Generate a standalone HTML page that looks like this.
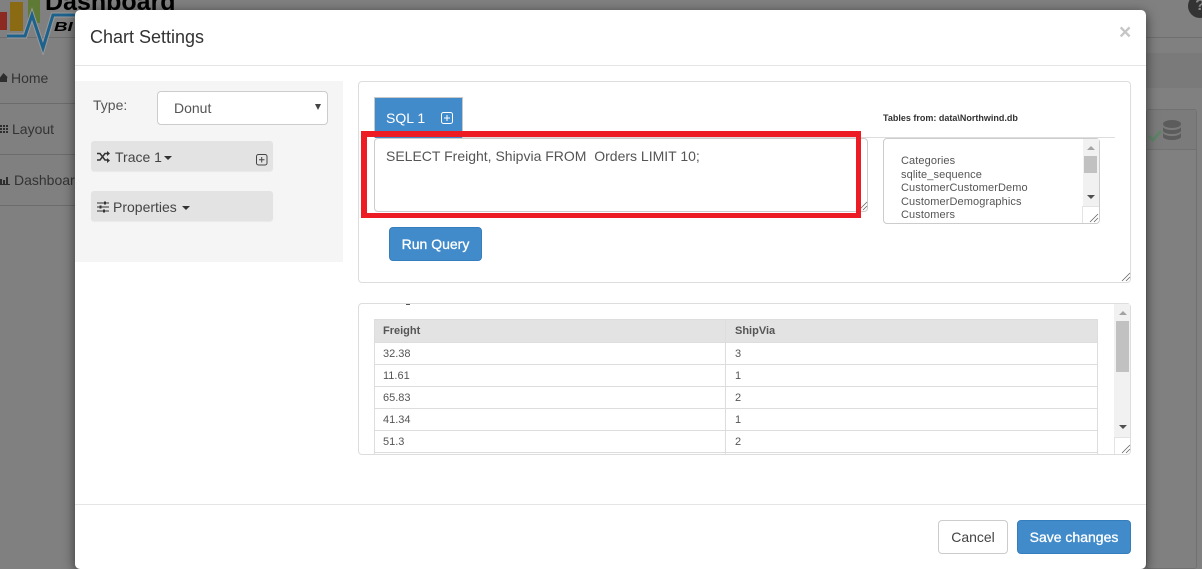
<!DOCTYPE html>
<html><head><meta charset="utf-8"><style>
html,body{margin:0;padding:0;width:1202px;height:569px;overflow:hidden}
body{position:relative;background:#808080;font-family:"Liberation Sans",sans-serif;color:#555}
.a{position:absolute;box-sizing:border-box;white-space:nowrap}
.sb{background:#f1f1f1;width:15px}
.c{font-size:11px;line-height:12px}
.h{font:bold 11px/12px 'Liberation Sans',sans-serif}
</style></head><body>
<!-- background page -->
<div class="a" style="left:0;top:37px;width:1202px;height:1px;background:#6f6f6f"></div>
<div class="a" style="left:0;top:53px;width:1202px;height:35px;background:#7a7a7a"></div>
<div class="a" style="left:0;top:53px;width:75px;height:400px;background:#808080"></div>
<div class="a" style="left:0;top:103px;width:75px;height:1px;background:#6c6c6c"></div>
<div class="a" style="left:0;top:154px;width:75px;height:1px;background:#6c6c6c"></div>
<div class="a" style="left:0;top:205px;width:75px;height:1px;background:#6c6c6c"></div>
<div class="a" style="left:1146px;top:109px;width:51px;height:460px;background:#808080;border:1px solid #717171;border-radius:3px"></div>
<div class="a" style="left:1147px;top:110px;width:49px;height:40px;background:#7b7b7b;border-bottom:1px solid #717171"></div>
<svg class="a" style="left:0;top:0" width="75" height="55" viewBox="0 0 75 55">
<rect x="0" y="12" width="7" height="18" fill="#8c2a22"/><rect x="10" y="2" width="13" height="29" fill="#8a6a12"/><rect x="28" y="0" width="12" height="23" fill="#5f7a35"/>
<path d="M7 36H25L32 15L43 48L53 15H75" fill="none" stroke="#9a9a9a" stroke-width="5"/>
<path d="M7 36H25L32 15L43 48L53 15H75" fill="none" stroke="#1c628c" stroke-width="3"/>
</svg>
<div class="a" style="left:45px;top:-12px;font:bold 25px 'Liberation Sans',sans-serif;color:#000">Dashboard</div>
<div class="a" style="left:54px;top:20px;font:italic bold 12.500px 'Liberation Sans',sans-serif;letter-spacing:0;color:#000;transform:scaleX(1.500);transform-origin:0 0">BI</div>
<svg class="a" style="left:0;top:73px" width="8" height="9"><path d="M3.500 0L8 4.500H7V9H0V4.500z" fill="#2e2e2e"/></svg>
<div class="a" style="left:11px;top:70px;font-size:14px;color:#333">Home</div>
<svg class="a" style="left:0;top:125px" width="9" height="8"><path d="M0 0h2v2H0zM3 0h2v2H3zM6 0h2v2H6zM0 3h2v2H0zM3 3h2v2H3zM6 3h2v2H6zM0 6h2v2H0zM3 6h2v2H3zM6 6h2v2H6z" fill="#2e2e2e"/></svg>
<div class="a" style="left:12px;top:121px;font-size:14px;color:#333">Layout</div>
<svg class="a" style="left:0;top:176px" width="10" height="9"><path d="M0 3h2v5H0zM3 4h2v4H3zM6 1h2v7H6zM0 8h10v1H0z" fill="#2e2e2e"/></svg>
<div class="a" style="left:14px;top:172px;font-size:14px;color:#333">Dashboard</div>
<svg class="a" style="left:1146px;top:118px" width="40" height="30" viewBox="0 0 40 30">
<path d="M3 18l4 4 8-9" fill="none" stroke="#5f8468" stroke-width="3"/>
<ellipse cx="26" cy="6" rx="9" ry="4" fill="#5c5c5c"/><path d="M17 9c2 4 16 4 18 0v4c-2 4-16 4-18 0zM17 15c2 4 16 4 18 0v4c-2 4-16 4-18 0z" fill="#5c5c5c"/>
</svg>
<div class="a" style="left:1188px;top:-6px;width:24px;height:24px;border-radius:12px;background:#333;color:#888;font:bold 16px/24px 'Liberation Sans',sans-serif;text-align:center">?</div>

<!-- modal -->
<div class="a" style="left:75px;top:10px;width:1071px;height:559px;background:#fff;border-radius:5px;box-shadow:0 3px 12px rgba(0,0,0,.6)"></div>
<div class="a" style="left:90px;top:27px;font-size:18px;line-height:20px;color:#333">Chart Settings</div>
<div class="a" style="left:1119px;top:22px;font:bold 21px/21px 'Liberation Sans',sans-serif;color:#c6c6c6">×</div>
<div class="a" style="left:75px;top:65px;width:1071px;height:1px;background:#e5e5e5"></div>
<div class="a" style="left:75px;top:504px;width:1071px;height:1px;background:#e5e5e5"></div>

<!-- left -->
<div class="a" style="left:75px;top:81px;width:268px;height:181px;background:#f5f5f5"></div>
<div class="a" style="left:93px;top:97px;font-size:14px;line-height:17px">Type:</div>
<div class="a" style="left:157px;top:91px;width:171px;height:34px;background:#fff;border:1px solid #ccc;border-radius:4px"></div>
<div class="a" style="left:174px;top:100px;font-size:14px;line-height:16px">Donut</div>
<div class="a" style="left:315px;top:104px;width:0;height:0;border-left:3.500px solid transparent;border-right:3.500px solid transparent;border-top:6px solid #444"></div>

<div class="a" style="left:91px;top:141px;width:182px;height:30px;background:#e3e3e3;border-radius:3px;box-shadow:0 1px 1px rgba(0,0,0,.05)"></div>
<svg class="a" style="left:97px;top:151px" width="13" height="12" viewBox="0 0 13 12"><path d="M0 2.500h3l5 6.500h2.500M0 9h3l5-6.500h2.500" fill="none" stroke="#333" stroke-width="1.500"/><path d="M10 0l3 2.500-3 2.500zM10 7l3 2.500-3 2.500z" fill="#333"/></svg>
<div class="a" style="left:115px;top:149px;font-size:14px;line-height:16px;color:#444">Trace 1</div>
<div class="a" style="left:164px;top:156px;width:0;height:0;border-left:4px solid transparent;border-right:4px solid transparent;border-top:4px solid #333"></div>
<svg class="a" style="left:256px;top:154px" width="13" height="12" viewBox="0 0 13 12"><rect x=".5" y=".5" width="10.500" height="10.500" rx="2" fill="none" stroke="#444"/><path d="M3 5.700h5.500M5.700 3v5.500" stroke="#444"/></svg>

<div class="a" style="left:91px;top:191px;width:182px;height:30px;background:#e3e3e3;border-radius:3px;box-shadow:0 1px 1px rgba(0,0,0,.05)"></div>
<svg class="a" style="left:97px;top:201px" width="13" height="12" viewBox="0 0 13 12"><path d="M0 2h12M0 6h12M0 10h12" stroke="#333"/><path d="M8 .5v3M3.500 4.500v3M7 8.500v3" stroke="#333" stroke-width="2"/></svg>
<div class="a" style="left:113px;top:199px;font-size:14px;line-height:16px;color:#444">Properties</div>
<div class="a" style="left:182px;top:206px;width:0;height:0;border-left:4px solid transparent;border-right:4px solid transparent;border-top:4px solid #333"></div>

<!-- SQL panel -->
<div class="a" style="left:358px;top:81px;width:773px;height:202px;background:#fff;border:1px solid #ddd;border-radius:4px"></div>
<svg class="a" style="left:1121px;top:272px" width="10" height="10"><path d="M1 9L9 1M5 9L9 5" stroke="#666" stroke-width=".8"/></svg>
<div class="a" style="left:374px;top:137px;width:741px;height:1px;background:#ddd"></div>
<div class="a" style="left:374px;top:97px;width:89px;height:41px;background:#428bca;border:1px solid #c8c8c8;border-bottom:0"></div>
<div class="a" style="left:386px;top:110px;font-size:14px;line-height:16px;color:#fff">SQL 1</div>
<svg class="a" style="left:441px;top:112px" width="13" height="13" viewBox="0 0 13 13"><rect x=".5" y=".5" width="11" height="11" rx="2" fill="none" stroke="#fff"/><path d="M3 6h6M6 3v6" stroke="#fff"/></svg>
<div class="a" style="left:883px;top:113px;font:bold 9px/11px 'Liberation Sans',sans-serif;color:#333">Tables from: data\Northwind.db</div>
<div class="a" style="left:374px;top:138px;width:494px;height:74px;background:#fff;border:1px solid #ccc;border-radius:4px"></div>
<div class="a" style="left:386px;top:148px;font-size:14px;line-height:16px;white-space:pre">SELECT Freight, Shipvia FROM  Orders LIMIT 10;</div>
<svg class="a" style="left:858px;top:201px" width="10" height="10"><path d="M1 9L9 1M5 9L9 5" stroke="#666" stroke-width=".8"/></svg>
<div class="a" style="left:389px;top:227px;width:93px;height:34px;background:#428bca;border:1px solid #357ebd;border-radius:4px;color:#fff;font-size:14px;line-height:32px;text-align:center;-webkit-text-stroke:.3px #fff">Run Query</div>

<!-- list -->
<div class="a" style="left:883px;top:138px;width:217px;height:86px;background:#fff;border:1px solid #ccc;border-radius:4px;overflow:hidden"></div>
<div class="a" style="left:901px;top:155px;font-size:11px;line-height:13.500px;letter-spacing:.1px;color:#555">Categories<br>sqlite_sequence<br>CustomerCustomerDemo<br>CustomerDemographics<br>Customers</div>
<div class="a sb" style="left:1083px;top:139px;height:67px;width:16px"></div>
<div class="a" style="left:1084px;top:156px;width:13px;height:17px;background:#c1c1c1"></div>
<div class="a" style="left:1087px;top:146px;width:0;height:0;border-left:4px solid transparent;border-right:4px solid transparent;border-bottom:4px solid #a3a3a3"></div>
<div class="a" style="left:1087px;top:195px;width:0;height:0;border-left:4px solid transparent;border-right:4px solid transparent;border-top:4px solid #505050"></div>
<div class="a" style="left:1082px;top:206px;width:1px;height:17px;background:#e3e3e3"></div>
<div class="a" style="left:1083px;top:206px;width:16px;height:1px;background:#e3e3e3"></div>
<svg class="a" style="left:1089px;top:213px" width="10" height="10"><path d="M1 9L9 1M5 9L9 5" stroke="#666" stroke-width=".8"/></svg>

<!-- results -->
<div class="a" style="left:358px;top:303px;width:773px;height:152px;background:#fff;border:1px solid #ddd;border-radius:4px"></div>
<div class="a" style="left:406px;top:304px;width:4px;height:1px;background:#555"></div>
<div class="a" style="left:374px;top:319px;width:724px;height:135px;border-left:1px solid #ddd;border-right:1px solid #ddd"></div>
<div class="a" style="left:375px;top:320px;width:722px;height:23px;background:#e3e3e3"></div>
<div class="a" style="left:725px;top:319px;width:1px;height:135px;background:#ddd"></div>
<div class="a" style="left:374px;top:319px;width:724px;height:1px;background:#ddd"></div>
<div class="a" style="left:374px;top:342px;width:724px;height:1px;background:#ddd"></div>
<div class="a" style="left:374px;top:364px;width:724px;height:1px;background:#ddd"></div>
<div class="a" style="left:374px;top:386px;width:724px;height:1px;background:#ddd"></div>
<div class="a" style="left:374px;top:408px;width:724px;height:1px;background:#ddd"></div>
<div class="a" style="left:374px;top:430px;width:724px;height:1px;background:#ddd"></div>
<div class="a" style="left:374px;top:452px;width:724px;height:1px;background:#ddd"></div>
<div class="a h" style="left:383px;top:325px">Freight</div>
<div class="a h" style="left:735px;top:325px">ShipVia</div>
<div class="a c" style="left:383px;top:348px">32.38</div><div class="a c" style="left:735px;top:348px">3</div>
<div class="a c" style="left:383px;top:370px">11.61</div><div class="a c" style="left:735px;top:370px">1</div>
<div class="a c" style="left:383px;top:392px">65.83</div><div class="a c" style="left:735px;top:392px">2</div>
<div class="a c" style="left:383px;top:414px">41.34</div><div class="a c" style="left:735px;top:414px">1</div>
<div class="a c" style="left:383px;top:436px">51.3</div><div class="a c" style="left:735px;top:436px">2</div>
<div class="a sb" style="left:1114px;top:304px;height:133px;width:16px"></div>
<div class="a" style="left:1116px;top:321px;width:13px;height:51px;background:#c1c1c1"></div>
<div class="a" style="left:1119px;top:311px;width:0;height:0;border-left:4px solid transparent;border-right:4px solid transparent;border-bottom:4px solid #a3a3a3"></div>
<div class="a" style="left:1119px;top:425px;width:0;height:0;border-left:4px solid transparent;border-right:4px solid transparent;border-top:4px solid #505050"></div>
<div class="a" style="left:1114px;top:437px;width:1px;height:17px;background:#e3e3e3"></div>
<div class="a" style="left:1114px;top:437px;width:16px;height:1px;background:#e3e3e3"></div>
<svg class="a" style="left:1121px;top:444px" width="10" height="10"><path d="M1 9L9 1M5 9L9 5" stroke="#666" stroke-width=".8"/></svg>

<!-- footer -->
<div class="a" style="left:938px;top:520px;width:70px;height:34px;background:#fff;border:1px solid #ccc;border-radius:4px;color:#444;font-size:14px;line-height:32px;text-align:center">Cancel</div>
<div class="a" style="left:1017px;top:520px;width:114px;height:34px;background:#428bca;border:1px solid #357ebd;border-radius:4px;color:#fff;font-size:14px;line-height:32px;text-align:center;-webkit-text-stroke:.3px #fff">Save changes</div>

<!-- red highlight -->
<div class="a" style="left:361px;top:131px;width:500px;height:87px;border-style:solid;border-color:#ed1c24;border-width:6px 5px 5px 6px"></div>
</body></html>
